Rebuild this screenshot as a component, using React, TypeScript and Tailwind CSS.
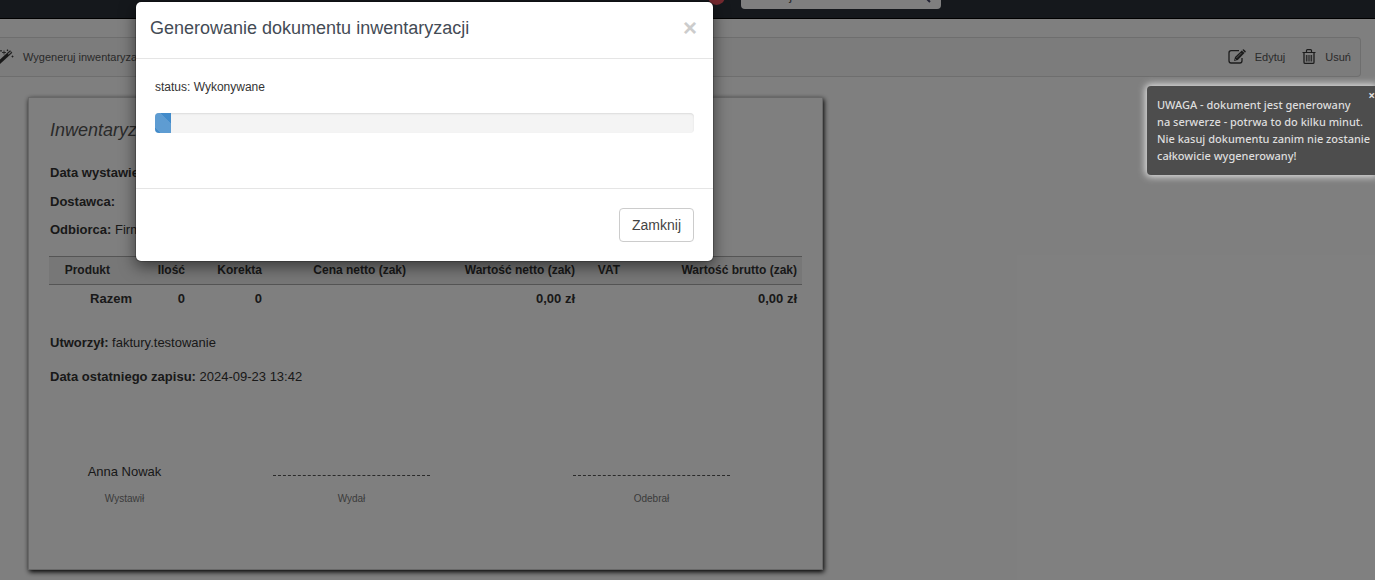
import React from "react";

function WandIcon() {
  return (
    <svg className="-ml-1 h-4 w-[18px] shrink-0" viewBox="0 0 18 16" fill="none" stroke="#333" aria-hidden="true">
      <path d="M2 14.500 15.200 2.600" strokeWidth="3.400" />
      <path d="m12.200 5.200 2.700-2.400" stroke="#ccc" strokeWidth="1.300" />
      <path d="M8 1.500v4M6 3.500h4M16.500 6.500v2M15.500 7.500h2M5 1v1.600M4.200 1.800h1.600M11.500.500v1.600M10.700 1.300h1.600" strokeWidth="0.800" />
    </svg>
  );
}

function EditIcon() {
  return (
    <svg className="h-4 w-[18px]" viewBox="0 0 18 16" fill="none" stroke="#383838" aria-hidden="true">
      <path d="M11 1.700H3.200Q1 1.700 1 3.900v7.900Q1 14 3.200 14h8.600q2.200 0 2.200-2.200V9" strokeWidth="1.300" />
      <path d="m6 12 1-4 6.800-6.500 2.700 2.600-6.700 6.800z" fill="#383838" stroke="none" />
      <path d="m14.400 1 .5-.5q.5-.5 1 0l1.700 1.600q.5.500 0 1l-.6.600z" fill="#383838" stroke="none" />
      <path d="m8.400 9 5-5M7 10l1.200 1.200" stroke="#ddd" strokeWidth="0.700" />
    </svg>
  );
}

function TrashIcon() {
  return (
    <svg className="h-4 w-[14px]" viewBox="0 0 14 16" fill="none" stroke="#383838" aria-hidden="true">
      <path d="M.5 3.500h13M4.500 3V1.600q0-.9.9-.9h3.200q.9 0 .9.900V3" strokeWidth="1.200" />
      <path d="M2 4v9.200q0 1.200 1.200 1.200h7.600q1.200 0 1.200-1.200V4" strokeWidth="1.300" />
      <path d="M4.400 6v6.500M6.100 6v6.500M7.900 6v6.500M9.600 6v6.500" strokeWidth="0.900" />
    </svg>
  );
}

function TopBar() {
  return (
    <header className="flex h-[19px] items-start border-b border-black bg-[#2a3139]">
      <span className="ml-[708px] -mt-3 size-[17px] shrink-0 rounded-full bg-[#e8505c]" />
      <div className="-mt-[21px] ml-4 flex h-[30px] w-[200px] items-center rounded bg-white pl-3 pr-2">
        <input
          type="search"
          aria-label="Szukaj"
          placeholder="Szukaj"
          className="mt-1 w-full min-w-0 bg-transparent text-[13px] leading-4 outline-none placeholder:text-[#555]"
        />
        <svg className="mt-1 size-4 shrink-0" viewBox="0 0 16 16" fill="none" stroke="#446" strokeWidth="2" aria-hidden="true">
          <circle cx="6" cy="7" r="4" />
          <path d="m9 10 4 4" />
        </svg>
      </div>
    </header>
  );
}

function Toolbar() {
  return (
    <nav className="mr-[14px] mt-[18px] flex h-10 items-center justify-between rounded-r border border-l-0 border-[#dcdcdc] bg-[#f8f8f8] pr-[9px] text-[11px] text-[#555]">
      <button type="button" className="flex items-center gap-[9px]">
        <WandIcon />
        Wygeneruj inwentaryzację
      </button>
      <div className="flex items-center gap-[17px]">
        <button type="button" className="flex items-center gap-[9px]">
          <EditIcon />
          Edytuj
        </button>
        <button type="button" className="flex items-center gap-[9px]">
          <TrashIcon />
          Usuń
        </button>
      </div>
    </nav>
  );
}

function Signature({ name, role, className }: { name?: string; role: string; className: string }) {
  return (
    <div className={className}>
      <div className="flex h-5 w-[157px] items-center justify-center">
        {name ?? <span className="mt-2 w-full border-t border-dashed border-[#555]" />}
      </div>
      <div className="mt-[9px] w-[157px] text-center text-[10px] leading-4 text-[#777]">{role}</div>
    </div>
  );
}

function InvoiceSheet() {
  return (
    <main className="ml-[28px] mt-5 w-[795px] border border-[#d0d0d0] bg-white px-[21px] pb-[62px] pt-5 text-[13px] text-[#333] shadow-[1px_2px_5px_#000]">
      <h1 className="text-[18px] italic leading-6 text-[#555]">Inwentaryzacja</h1>
      <p className="mt-[21px] leading-5">
        <b>Data wystawienia:</b> 2024-09-23
      </p>
      <p className="mt-[9px] leading-5">
        <b>Dostawca:</b>
      </p>
      <p className="mt-2 leading-5">
        <b>Odbiorca:</b> Firma
      </p>
      <div className="-mx-px mt-4">
        <table className="w-full table-fixed border-collapse text-right font-bold">
          <colgroup>
            <col className="w-[87px]" />
            <col className="w-[53px]" />
            <col className="w-[77px]" />
            <col className="w-[144px]" />
            <col className="w-[169px]" />
            <col className="w-[45px]" />
            <col />
          </colgroup>
          <thead>
            <tr className="h-7 border-y border-[#aaa] bg-[#efefef] text-[12px]">
              <th className="pb-0.5 pr-[26px]">Produkt</th>
              <th className="pb-0.5 pr-1">Ilość</th>
              <th className="pb-0.5 pr-1">Korekta</th>
              <th className="pb-0.5 pr-1">Cena netto (zak)</th>
              <th className="pb-0.5 pr-1">Wartość netto (zak)</th>
              <th className="pb-0.5 pr-1">VAT</th>
              <th className="pb-0.5 pr-[5px]">Wartość brutto (zak)</th>
            </tr>
          </thead>
          <tbody>
            <tr className="h-7">
              <td className="pr-1">Razem</td>
              <td className="pr-1">0</td>
              <td className="pr-1">0</td>
              <td />
              <td className="pr-1">0,00 zł</td>
              <td />
              <td className="pr-[5px]">0,00 zł</td>
            </tr>
          </tbody>
        </table>
      </div>
      <p className="mt-5 leading-5">
        <b>Utworzył:</b> faktury.testowanie
      </p>
      <p className="mt-[14px] leading-5">
        <b>Data ostatniego zapisu:</b> 2024-09-23 13:42
      </p>
      <div className="mt-[75px] flex">
        <Signature name="Anna Nowak" role="Wystawił" className="-ml-1" />
        <Signature role="Wydał" className="ml-[70px]" />
        <Signature role="Odebrał" className="ml-[143px]" />
      </div>
    </main>
  );
}

function ProgressDialog() {
  return (
    <section
      role="dialog"
      aria-labelledby="dialog-title"
      className="absolute left-[135px] top-px w-[579px] rounded-md border border-black/20 bg-white bg-clip-padding shadow-[0_5px_15px_rgba(0,0,0,0.5)]"
    >
      <header className="flex h-[57px] items-center justify-between border-b border-[#e5e5e5] pb-1 pl-[14px] pr-4">
        <h2 id="dialog-title" className="text-[18px] leading-6 text-[#444b55]">
          Generowanie dokumentu inwentaryzacji
        </h2>
        <button type="button" aria-label="Zamknij okno" className="text-[24px] font-bold leading-6 text-[#ccc]">
          ×
        </button>
      </header>
      <div className="h-[129px] px-[19px] pt-[18px]">
        <p className="text-[12px] leading-5 text-[#333]">status: Wykonywane</p>
        <div
          role="progressbar"
          aria-label="Postęp"
          aria-valuenow={3}
          className="mt-4 h-5 overflow-hidden rounded bg-[#f4f4f4] shadow-[inset_0_1px_2px_rgba(0,0,0,0.1)]"
        >
          <div className="h-full w-[3%] bg-[#428bca] bg-[linear-gradient(45deg,rgba(255,255,255,0.15)_25%,transparent_25%,transparent_50%,rgba(255,255,255,0.15)_50%,rgba(255,255,255,0.15)_75%,transparent_75%)] bg-[length:40px_40px] bg-[position:-14px_0px]" />
        </div>
      </div>
      <footer className="flex justify-end border-t border-[#e5e5e5] px-[19px] py-[19px]">
        <button type="button" className="h-[34px] rounded border border-[#ccc] px-3 text-[14px] text-[#444]">
          Zamknij
        </button>
      </footer>
    </section>
  );
}

function Notice() {
  return (
    <aside
      role="status"
      className="absolute right-0 top-[86px] w-[228px] whitespace-nowrap rounded-l bg-[#4d4d4d] px-[10px] pb-[11px] pt-[10px] font-['Noto_Sans',sans-serif] text-[11px] font-medium leading-[17px] text-[#ddd] shadow-[0_0_7px_2px_#ddd]"
    >
      <button type="button" aria-label="Zamknij powiadomienie" className="absolute right-0 top-px text-[12px] font-bold">
        ×
      </button>
      UWAGA - dokument jest generowany
      <br />
      na serwerze - potrwa to do kilku minut.
      <br />
      Nie kasuj dokumentu zanim nie zostanie
      <br />
      całkowicie wygenerowany!
    </aside>
  );
}

export default function App() {
  return (
    <div className="relative min-h-screen overflow-hidden bg-white font-['Liberation_Sans',Arial,sans-serif]">
      <TopBar />
      <Toolbar />
      <InvoiceSheet />
      <div className="absolute inset-0 bg-black/50" />
      <ProgressDialog />
      <Notice />
    </div>
  );
}
